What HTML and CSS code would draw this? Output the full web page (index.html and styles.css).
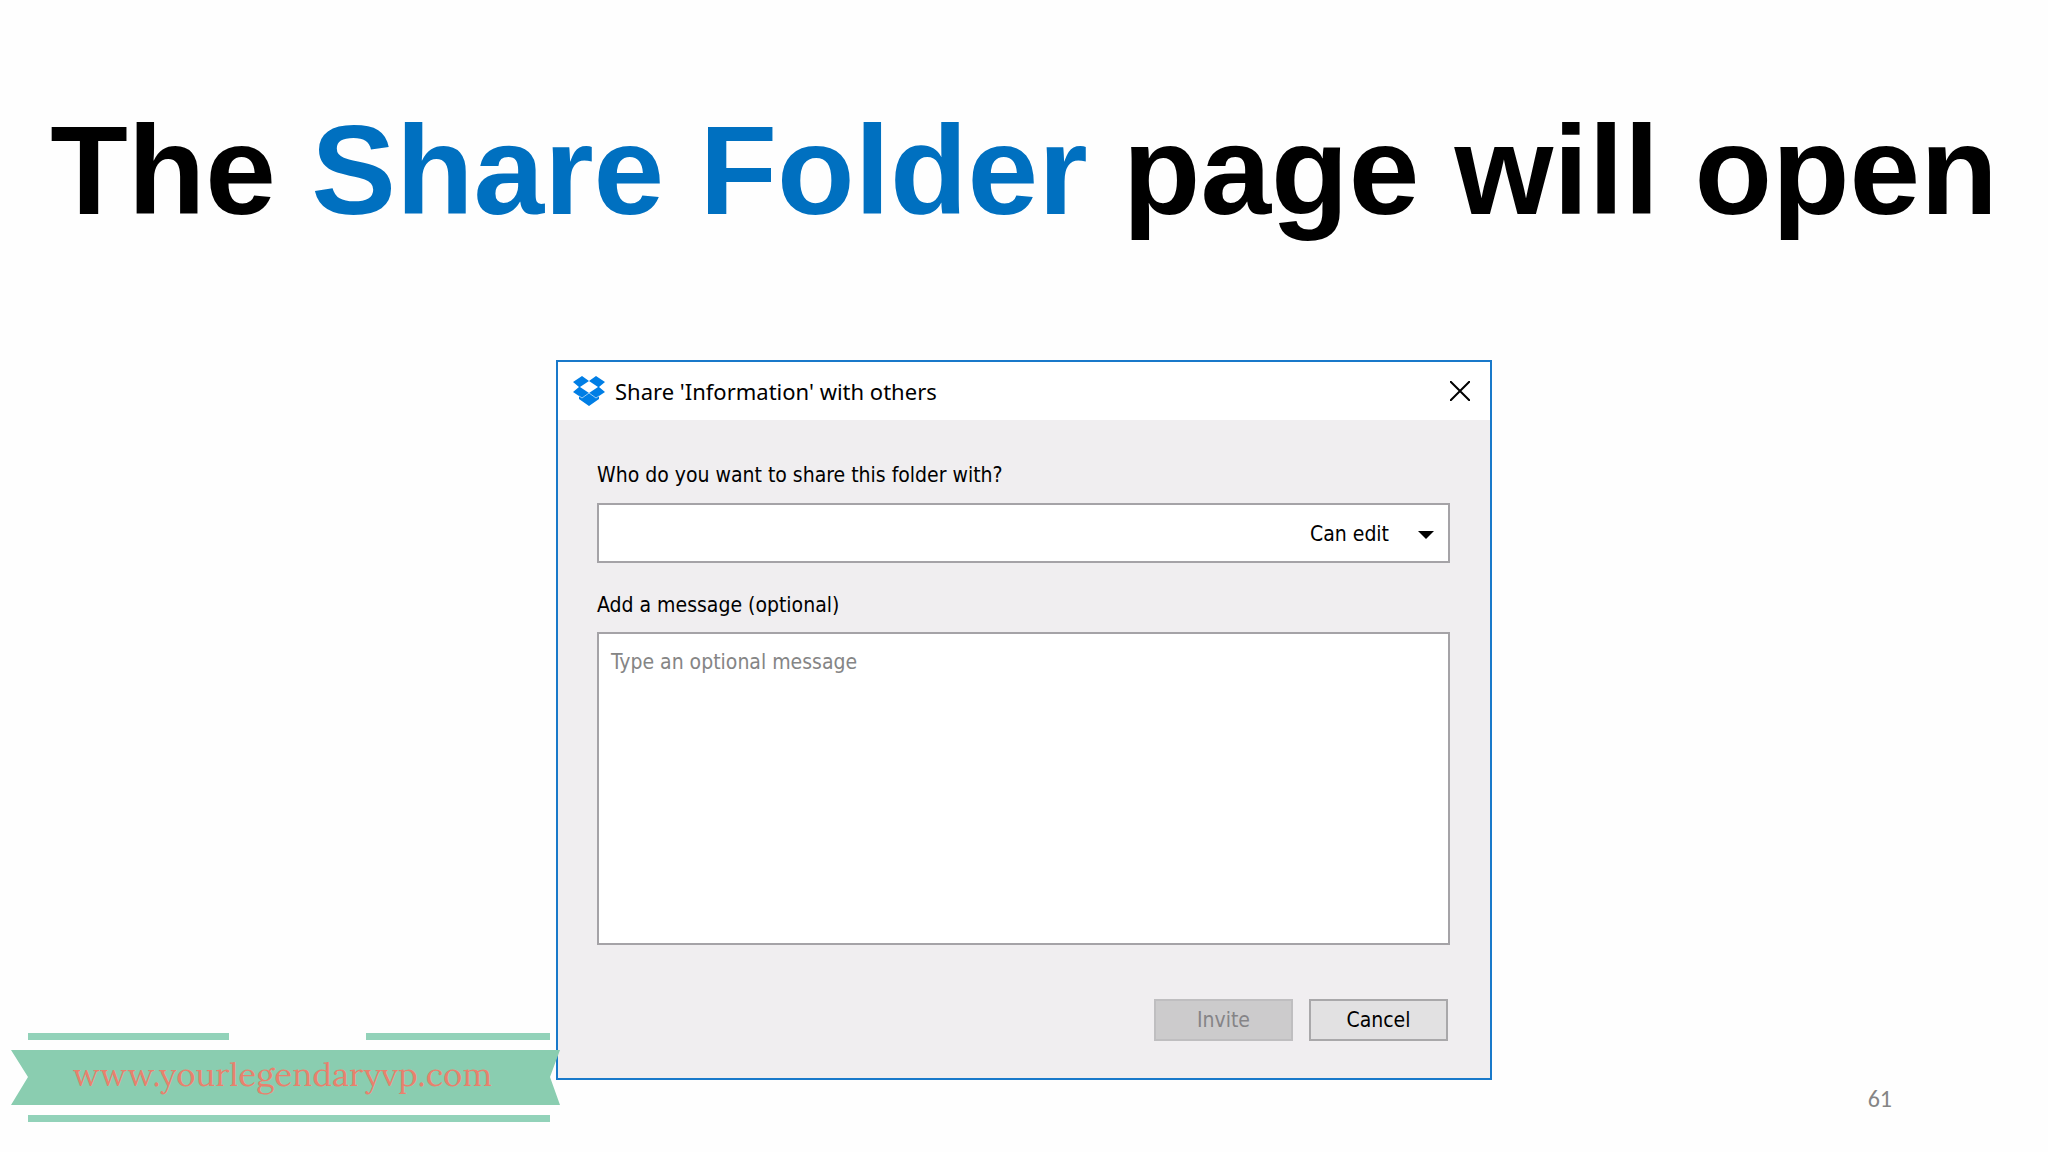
FILE: index.html
```html
<!DOCTYPE html>
<html lang="en">
<head>
    <meta charset="UTF-8">
    <meta name="viewport" content="width=device-width, initial-scale=1.0">
    <title>Share Folder</title>
    <link rel="stylesheet" href="styles.css">
</head>
<body>

<h1>The <span>Share Folder</span> page will open</h1>

<main>
    <form class="dialog">
        <div class="titlebar">
            <svg class="logo" viewBox="0 0 32 30" aria-hidden="true">
                <path d="M9 0 16 5 23 0 32 6 26 11 32 16 26 20 26 23 16 30 6 23 6 20 0 16 6 11 0 6Z" fill="#007ee5"/>
                <path d="M16 5 25 11 16 17 7 11Z" fill="#fff"/>
                <path d="M6 20 9 22 16 17 23 22 26 20" fill="none" stroke="#fff" stroke-width="0.6"/>
            </svg>
            <h2>Share 'Information' with others</h2>
            <button type="button" class="close" aria-label="Close">
                <svg viewBox="0 0 20 20"><path d="M0 0 20 20M20 0 0 20" stroke="#000" stroke-width="2"/></svg>
            </button>
        </div>
        <div class="content">
            <label for="people">Who do you want to share this folder with?</label>
            <div class="people">
                <input type="text" id="people">
                <select aria-label="Permission">
                    <option>Can edit</option>
                    <option>Can view</option>
                </select>
                <svg class="arrow" viewBox="0 0 16 8" aria-hidden="true"><path d="M0 0H16L8 8Z"/></svg>
            </div>
            <label for="message">Add a message (optional)</label>
            <textarea id="message" placeholder="Type an optional message"></textarea>
            <div class="buttons">
                <button type="submit" disabled>Invite</button>
                <button type="button">Cancel</button>
            </div>
        </div>
    </form>
</main>

<footer>61</footer>

<div class="ribbon">
    <svg viewBox="0 0 549 90" aria-hidden="true">
        <path d="M17 1H218V8H17ZM355 1H539V8H355ZM17 83H539V90H17Z" fill="#92d2b9"/>
        <path d="M0 18H549L539 45 549 73H0L17 45Z" fill="#8acdb0"/>
    </svg>
    <a href="#">www.yourlegendaryvp.com</a>
</div>

</body>
</html>
```

FILE: styles.css
```css
* {
    box-sizing: border-box;
}
body {
    margin: 0;
    min-height: 100vh;
    position: relative;
    display: flex;
    flex-direction: column;
    background: #fefefe;
    color: #000;
    font-family: "DejaVu Sans Condensed", "DejaVu Sans", sans-serif;
    font-size: 21px;
}
h1 {
    margin: 0;
    padding-top: 98px;
    font-family: "Arial Rounded MT Bold", "Liberation Sans", Arial, sans-serif;
    font-size: 127px;
    line-height: 144px;
    font-weight: bold;
    text-align: center;
    white-space: nowrap;
}
h1 span {
    color: #0070c0;
}
main {
    display: flex;
    justify-content: center;
    padding-top: 118px;
}
.dialog {
    width: 936px;
    border: 2px solid #1979ca;
    background: #f0eef0;
}
.titlebar {
    display: flex;
    align-items: center;
    height: 58px;
    padding: 0 20px 0 15px;
    background: #fff;
}
.logo {
    width: 32px;
    height: 30px;
}
h2 {
    flex: 1;
    margin: 0 0 0 10px;
    font-family: "Noto Sans", sans-serif;
    font-size: 22px;
    font-weight: normal;
}
.close {
    display: flex;
    padding: 0;
    border: 0;
    background: none;
}
.close svg {
    width: 20px;
    height: 20px;
}
.content {
    display: flex;
    flex-direction: column;
    padding: 41px 40px 37px 39px;
}
label {
    line-height: 28px;
}
.people {
    position: relative;
    display: flex;
    height: 60px;
    margin: 14px 0 28px;
    border: 2px solid #a5a3a7;
    background: #fff;
}
.people input {
    flex: 1;
    min-width: 0;
    border: 0;
    padding: 0 12px;
    font: inherit;
}
.people select {
    width: 138px;
    padding: 2px 0 0;
    border: 0;
    appearance: none;
    background: none;
    color: #000;
    font: inherit;
}
.arrow {
    position: absolute;
    right: 14px;
    top: 26px;
    width: 16px;
    height: 8px;
    pointer-events: none;
}
textarea {
    height: 313px;
    margin-top: 13px;
    padding: 16px 12px;
    border: 2px solid #a5a3a7;
    border-radius: 0;
    background: #fff;
    font: inherit;
    resize: none;
}
textarea::placeholder {
    color: #858585;
}
.buttons {
    display: flex;
    justify-content: flex-end;
    gap: 16px;
    margin-top: 54px;
    padding-right: 2px;
}
.buttons button {
    width: 139px;
    height: 42px;
    padding: 0;
    border: 2px solid #a9a8aa;
    border-radius: 0;
    background: #e2e1e2;
    color: #000;
    font: inherit;
}
.buttons button:disabled {
    border-color: #bfbec0;
    background: #cccbcc;
    color: #858487;
}
footer {
    padding: 3px 156px 0 0;
    color: #858585;
    font-family: Carlito, Lato, sans-serif;
    font-size: 24px;
    line-height: 32px;
    text-align: right;
}
.ribbon {
    position: absolute;
    left: 11px;
    bottom: 30px;
    width: 549px;
}
.ribbon svg {
    display: block;
    width: 100%;
}
.ribbon a {
    position: absolute;
    left: 62px;
    top: 20px;
    color: #e8816d;
    font-family: Lora, "Liberation Serif", serif;
    font-size: 33px;
    line-height: 44px;
    text-decoration: none;
}
```
